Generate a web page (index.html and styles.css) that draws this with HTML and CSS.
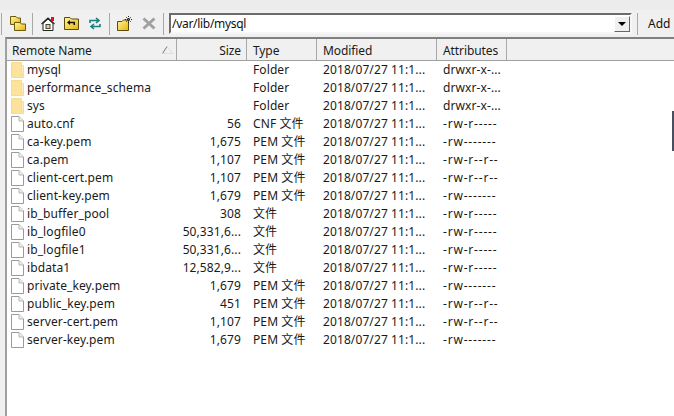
FILE: index.html
```html
<!DOCTYPE html>
<html>
<head>
<meta charset="utf-8">
<title>Remote files</title>
<link rel="stylesheet" href="styles.css">
</head>
<body>
<svg class="defs" width="0" height="0">
<defs>
<linearGradient id="gold" x1="0" y1="0" x2="1" y2="1"><stop offset="0" stop-color="#fff6a8"/><stop offset="1" stop-color="#e8b400"/></linearGradient>
<symbol id="folder" viewBox="0 0 13 16"><path d="M0.5 0.5H10.5V12.5H12.5V15.5H0.5Z" fill="#fbe39c" stroke="#f6dc90"/><path d="M10.5 3.5H12.5V12.5H10.5Z" fill="#fdf0c4" stroke="#f6dc90"/></symbol>
<symbol id="file" viewBox="0 0 13 16"><path d="M.5 .5H8L12.5 5V15.5H.5Z" fill="#fff" stroke="#9a9a9a"/><path d="M8 .5V5H12.5" fill="#eee" stroke="#b5b5b5"/></symbol>
</defs>
</svg>
<header class="toolbar">
<div class="strip"></div>
<div class="tools">
<span class="sep first"></span>
<svg class="ic ic-a" viewBox="0 0 16 15"><path d="M.5 .5H6L7.5 2H10.5V8.5H.5Z" fill="url(#gold)" stroke="#6b5a10"/><path d="M4.5 6.5H10L11.5 8H15.5V14.5H4.5Z" fill="url(#gold)" stroke="#6b5a10"/></svg>
<span class="sep"></span>
<svg class="ic ic-b" viewBox="0 0 14 14"><path d="M2 13.5V6.5L7 2L12 6.5V13.5Z" fill="#fff" stroke="#222"/><path d="M.5 7L7 1L13.5 7" fill="none" stroke="#222" stroke-width="1.2"/><rect x="10" y="0" width="3" height="4" fill="#d8102a"/><rect x="5" y="7.5" width="4" height="4" fill="#f4d25a" stroke="#444"/></svg>
<svg class="ic ic-c" viewBox="0 0 15 13"><path d="M.5 12.5V.5H6L7.5 2H14.5V12.5Z" fill="url(#gold)" stroke="#5a4b0c"/><path d="M3 5.5L6 3V4.8H11V8H9.5V6.2H6V8Z" fill="#111"/></svg>
<svg class="ic ic-d" viewBox="0 0 14 13"><path d="M2 6V3.5H10M8 1L11 3.5L8 6" fill="none" stroke="#1a7f7f" stroke-width="1.6"/><path d="M12 7V9.5H4M6 7L3 9.5L6 12" fill="none" stroke="#1a7f7f" stroke-width="1.6"/></svg>
<span class="sep"></span>
<svg class="ic ic-e" viewBox="0 0 16 15"><path d="M.5 14.5V5.5H5L6.5 4H11.5V14.5Z" fill="url(#gold)" stroke="#5a4b0c"/><path d="M11.5 0V7M8 3.5H15M9 1L14 6M14 1L9 6" stroke="#222" stroke-dasharray="1 1"/></svg>
<svg class="ic ic-f" viewBox="0 0 14 13"><path d="M1.5 1.5L12.5 11.5M12.5 1.5L1.5 11.5" stroke="#a0a0a0" stroke-width="3"/></svg>
<span class="sep"></span>
<div class="combo">
<span class="path">/var/lib/mysql</span>
<span class="drop"></span>
</div>
<span class="sep add-sep"></span>
<span class="add">Add</span>
</div>
</header>
<main class="panel">
<div class="row head">
<div class="hc name">Remote Name<svg class="sort" viewBox="0 0 12 8"><path d="M0.5 7.5L5 .5" stroke="#777" fill="none"/><path d="M5 .5L11 7.5H.5" stroke="#ddd" fill="none"/></svg></div>
<div class="hc size">Size</div>
<div class="hc">Type</div>
<div class="hc">Modified</div>
<div class="hc">Attributes</div>
<div class="hc end"></div>
</div>
<div class="row"><div class="name"><svg class="fi"><use href="#folder"/></svg>mysql</div><div class="size"></div><div>Folder</div><div>2018/07/27 11:1...</div><div>drwxr-x-...</div></div>
<div class="row"><div class="name"><svg class="fi"><use href="#folder"/></svg>performance_schema</div><div class="size"></div><div>Folder</div><div>2018/07/27 11:1...</div><div>drwxr-x-...</div></div>
<div class="row"><div class="name"><svg class="fi"><use href="#folder"/></svg>sys</div><div class="size"></div><div>Folder</div><div>2018/07/27 11:1...</div><div>drwxr-x-...</div></div>
<div class="row"><div class="name"><svg class="fi"><use href="#file"/></svg>auto.cnf</div><div class="size">56</div><div>CNF 文件</div><div>2018/07/27 11:1...</div><div class="perm">-rw-r-----</div></div>
<div class="row"><div class="name"><svg class="fi"><use href="#file"/></svg>ca-key.pem</div><div class="size">1,675</div><div>PEM 文件</div><div>2018/07/27 11:1...</div><div class="perm">-rw-------</div></div>
<div class="row"><div class="name"><svg class="fi"><use href="#file"/></svg>ca.pem</div><div class="size">1,107</div><div>PEM 文件</div><div>2018/07/27 11:1...</div><div class="perm">-rw-r--r--</div></div>
<div class="row"><div class="name"><svg class="fi"><use href="#file"/></svg>client-cert.pem</div><div class="size">1,107</div><div>PEM 文件</div><div>2018/07/27 11:1...</div><div class="perm">-rw-r--r--</div></div>
<div class="row"><div class="name"><svg class="fi"><use href="#file"/></svg>client-key.pem</div><div class="size">1,679</div><div>PEM 文件</div><div>2018/07/27 11:1...</div><div class="perm">-rw-------</div></div>
<div class="row"><div class="name"><svg class="fi"><use href="#file"/></svg>ib_buffer_pool</div><div class="size">308</div><div>文件</div><div>2018/07/27 11:1...</div><div class="perm">-rw-r-----</div></div>
<div class="row"><div class="name"><svg class="fi"><use href="#file"/></svg>ib_logfile0</div><div class="size">50,331,6...</div><div>文件</div><div>2018/07/27 11:1...</div><div class="perm">-rw-r-----</div></div>
<div class="row"><div class="name"><svg class="fi"><use href="#file"/></svg>ib_logfile1</div><div class="size">50,331,6...</div><div>文件</div><div>2018/07/27 11:1...</div><div class="perm">-rw-r-----</div></div>
<div class="row"><div class="name"><svg class="fi"><use href="#file"/></svg>ibdata1</div><div class="size">12,582,9...</div><div>文件</div><div>2018/07/27 11:1...</div><div class="perm">-rw-r-----</div></div>
<div class="row"><div class="name"><svg class="fi"><use href="#file"/></svg>private_key.pem</div><div class="size">1,679</div><div>PEM 文件</div><div>2018/07/27 11:1...</div><div class="perm">-rw-------</div></div>
<div class="row"><div class="name"><svg class="fi"><use href="#file"/></svg>public_key.pem</div><div class="size">451</div><div>PEM 文件</div><div>2018/07/27 11:1...</div><div class="perm">-rw-r--r--</div></div>
<div class="row"><div class="name"><svg class="fi"><use href="#file"/></svg>server-cert.pem</div><div class="size">1,107</div><div>PEM 文件</div><div>2018/07/27 11:1...</div><div class="perm">-rw-r--r--</div></div>
<div class="row"><div class="name"><svg class="fi"><use href="#file"/></svg>server-key.pem</div><div class="size">1,679</div><div>PEM 文件</div><div>2018/07/27 11:1...</div><div class="perm">-rw-------</div></div>
<span class="edge"></span>
</main>
</body>
</html>
```
FILE: styles.css
```css
* { box-sizing: border-box; }
html, body { margin: 0; height: 100%; }
body {
  width: 674px;
  height: 416px;
  overflow: hidden;
  background: #f0f0f0;
  font-family: "Noto Sans", "Noto Sans CJK SC", sans-serif;
  font-size: 12px;
  color: #1a1a1a;
  display: flex;
  flex-direction: column;
}
.defs { position: absolute; }
.strip { height: 10px; background: #ececec; }
.toolbar { flex: none; height: 37px; overflow: hidden; }
.tools { height: 27px; display: flex; align-items: center; }
.sep { flex: none; width: 1px; height: 22px; background: #a8a8a8; }
.first { margin-left: 1px; }
.ic { flex: none; display: block; }
.ic-a { width: 16px; height: 15px; margin: 0 6px 0 8px; }
.ic-b { width: 14px; height: 14px; margin: 0 9px 0 8px; }
.ic-c { width: 15px; height: 13px; margin: 0 9px 0 0; }
.ic-d { width: 14px; height: 13px; margin: 0 7px 0 0; }
.ic-e { width: 16px; height: 15px; margin: 0 9px 0 7px; }
.ic-f { width: 14px; height: 13px; margin: 0 7px 0 0; }
.combo {
  flex: none;
  width: 463px;
  height: 21px;
  margin-left: 5px;
  background: #fff;
  border: 2px solid;
  border-color: #6b6b6b #f6f6f6 #f6f6f6 #6b6b6b;
  display: flex;
  align-items: center;
  justify-content: space-between;
  position: relative;
}
.path { padding-left: 1px; color: #111; letter-spacing: -0.3px; }
.drop {
  width: 16px;
  height: 16px;
  background: #f0f0f0;
  border: 1px solid;
  border-color: #fff #666 #666 #fff;
  position: relative;
}
.drop::after {
  content: "";
  position: absolute;
  left: 3px;
  top: 5px;
  border: 4px solid transparent;
  border-top: 4px solid #000;
  border-bottom: 0;
}
.add-sep { margin-left: 5px; }
.add { margin-left: 10px; white-space: nowrap; color: #111; }
.panel {
  flex: 1;
  margin-left: 5px;
  background: #fff;
  border-top: 2px solid #808080;
  border-left: 2px solid #a0a0a0;
  position: relative;
}
.row {
  display: grid;
  grid-template-columns: 170px 70px 70px 120px 70px 1fr;
  height: 18px;
  line-height: 18px;
  white-space: nowrap;
  letter-spacing: 0.1px;
}
.row > div { padding-left: 6px; overflow: hidden; }
.row > .name { padding-left: 0; display: flex; align-items: center; }
.row > .size { text-align: right; padding: 0 6px 0 0; }
.row > .perm { letter-spacing: 0.8px; }
.head {
  height: 22px;
  line-height: 23px;
  background: #f0f0f0;
  border-bottom: 1px solid #a0a0a0;
  letter-spacing: -0.1px;
}
.hc { border-right: 1px solid #a8a8a8; position: relative; }
.row > .hc.name { padding-left: 5px; display: block; }
.row > .hc.size { padding-right: 5px; }
.hc.end { border-right: 0; }
.sort { position: absolute; left: 155px; top: 7px; width: 12px; height: 8px; }
.fi { flex: none; width: 13px; height: 16px; margin: 0 3px 0 4px; }
.edge {
  position: absolute;
  right: 0;
  top: 72px;
  width: 2px;
  height: 40px;
  background: #4a4f60;
}
```
